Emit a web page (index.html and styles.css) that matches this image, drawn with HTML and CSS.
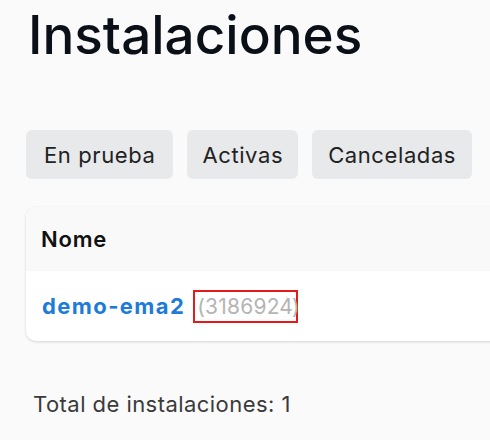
FILE: index.html
```html
<!DOCTYPE html>
<html lang="es">
<head>
<meta charset="utf-8">
<link rel="stylesheet" href="styles.css">
</head>
<body>
<main class="page">
  <h1 class="title">Instalaciones</h1>
  <div class="tabs">
    <button class="tab">En prueba</button>
    <button class="tab">Activas</button>
    <button class="tab">Canceladas</button>
  </div>
  <section class="card">
    <div class="card-head">Nome</div>
    <div class="card-row">
      <a class="name" href="#">demo-ema2</a>
      <span class="id"><span class="id-box">(3186924</span>)</span>
    </div>
  </section>
  <p class="total">Total de instalaciones: 1</p>
</main>
</body>
</html>
```
FILE: styles.css
```css
* { box-sizing: border-box; }
html, body { margin: 0; background: #fafafa; }
body { font-family: "Inter", "Noto Sans", sans-serif; color: #111; overflow: hidden; }
.page { padding: 0 0 0 26px; width: 520px; }
.title { margin: 0; padding: 4px 0 0 2px; font-size: 53px; font-weight: 500; line-height: 62px; color: #0b0f17; letter-spacing: 0; }
.tabs { display: flex; gap: 14px; margin-top: 64px; }
.tab { border: none; background: #e8e9eb; border-radius: 6px; height: 49px; padding: 0 16px; font-family: inherit; font-size: 22px; letter-spacing: 0.6px; color: #222; }
.tab:first-child { padding: 0 18px; }
.tab:nth-child(2) { padding: 0 15px; }
.card { margin-top: 28px; background: #fff; border-radius: 10px; box-shadow: 0 1px 3px rgba(0,0,0,0.15); overflow: hidden; }
.card-head { background: #f9f9f9; height: 64px; display: flex; align-items: center; padding-left: 15px; font-size: 22px; font-weight: 600; letter-spacing: 0.8px; color: #111; }
.card-row { height: 70px; display: flex; align-items: center; padding-left: 16px; gap: 12px; font-size: 22px; }
.name { color: #1e7bd8; font-weight: 700; letter-spacing: 1.4px; text-decoration: none; }
.id { color: #b4b4b4; font-size: 21px; letter-spacing: 0.2px; }
.id-box { display: inline-block; outline: 2px solid #e41b1b; outline-offset: 2px; padding: 0 1px 0 0; margin-right: -2px; }
.total { margin: 50px 0 0 7px; font-size: 22px; letter-spacing: 0.45px; color: #3a3a3a; }
```
